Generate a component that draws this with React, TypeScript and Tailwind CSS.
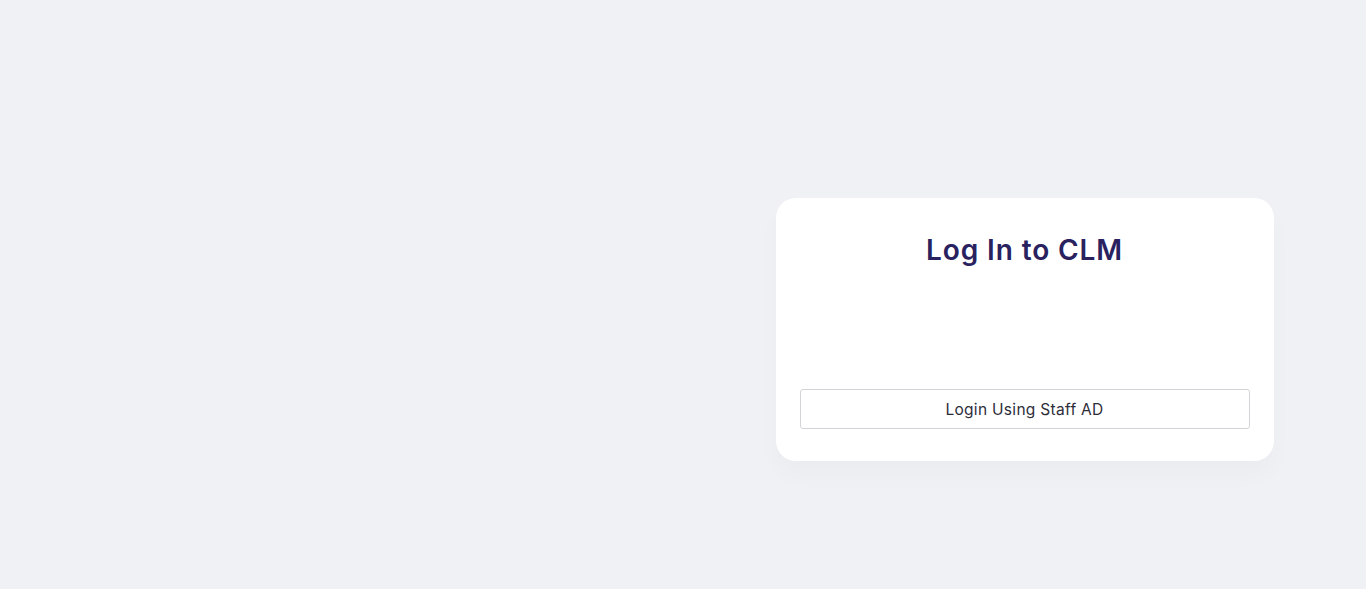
import React from 'react';

export default function App() {
  return (
    <div className="min-h-[589px] w-full bg-[#f0f1f5] flex font-['Inter',sans-serif]">
      {/* left side is blank */}
      <div className="flex-1" />

      <div className="flex-1 flex justify-center">
        <div className="mt-[198px] w-[498px] h-[263px] bg-white rounded-[20px] shadow-[0_14px_24px_rgba(30,30,60,0.025)] px-6 pt-[30px] pb-8 flex flex-col">
          <h1 className="text-center text-[28px] leading-[44px] font-semibold text-[#29225f] tracking-[0.9px]">
            Log In to CLM
          </h1>

          <div className="flex-1" />

          <button className="h-10 w-full border border-[#d4d4d8] rounded-[3px] bg-white text-[15.5px] text-[#2d2d3a] tracking-[0.3px] pt-[1px]">
            Login Using Staff AD
          </button>
        </div>
      </div>
    </div>
  );
}
